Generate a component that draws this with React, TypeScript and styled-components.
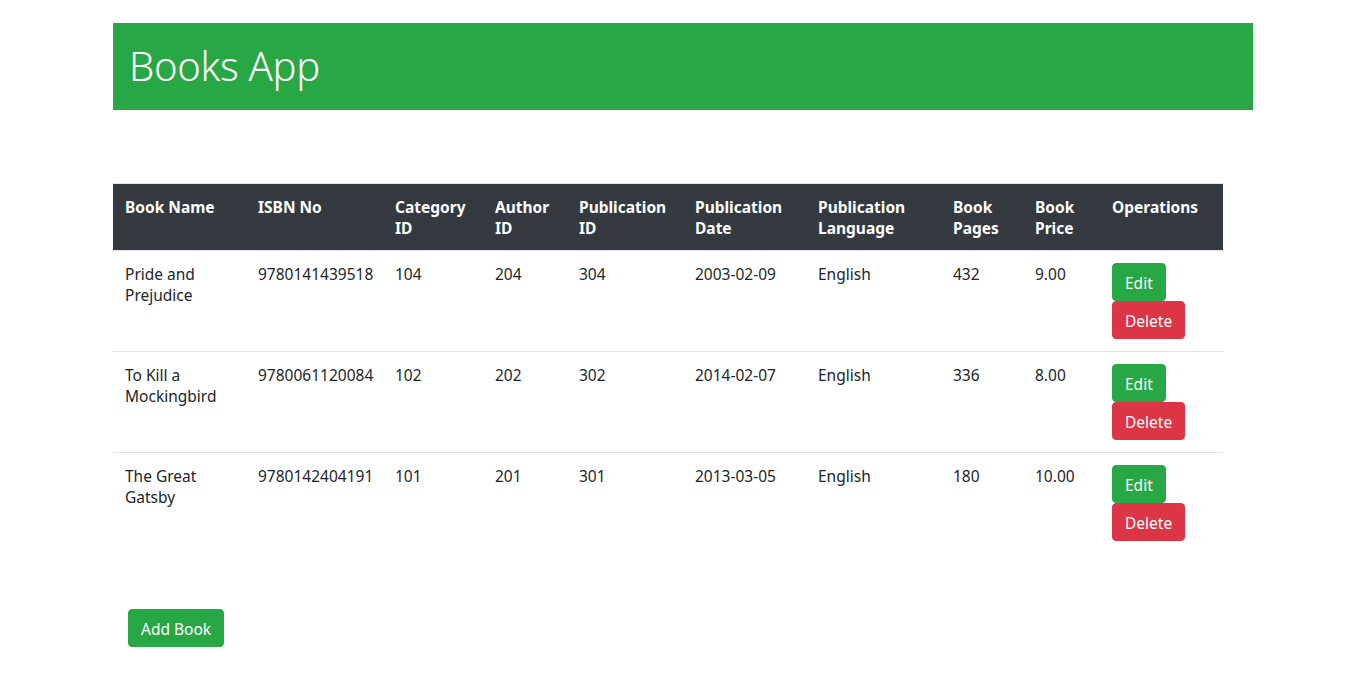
import React from "react";
import styled, { createGlobalStyle } from "styled-components";

const GlobalStyle = createGlobalStyle`
  html, body { margin: 0; padding: 0; background: #fff; }
  body {
    font-family: "Noto Sans", "Open Sans", sans-serif;
    font-size: 16px;
    color: #212529;
  }
  * { box-sizing: border-box; }
`;

const Container = styled.div`
  width: 1140px;
  margin: 0 auto;
  padding-top: 23px;
`;

const Banner = styled.header`
  height: 87px;
  background: #28a745;
  display: flex;
  align-items: center;
  padding: 0 16px;
`;

const Title = styled.h1`
  margin: 0 0 2px;
  font-size: 40px;
  font-weight: 300;
  line-height: 48px;
  color: #fff;
  letter-spacing: -0.3px;
`;

const Table = styled.table`
  margin-top: 73px;
  width: 1110px;
  border-collapse: collapse;
  table-layout: fixed;
  border-top: 1px solid #dee2e6;
`;

const HeadCell = styled.th<{ $w: number }>`
  width: ${(p) => p.$w}px;
  background: #343a40;
  color: #fff;
  font-weight: 700;
  text-align: left;
  vertical-align: top;
  padding: 13px 12px 11px;
  font-size: 15.5px;
  line-height: 21px;
  border-bottom: 1px solid #dee2e6;
`;

const Row = styled.tr`
  & + & td { border-top: 1px solid #dee2e6; }
`;

const Cell = styled.td<{ $ops?: boolean }>`
  vertical-align: top;
  padding: ${(p) => (p.$ops ? "12px 12px" : "13px 12px 11px")};
  font-size: 15.5px;
  line-height: 21px;
  color: #212529;
`;

const Ops = styled.div`
  display: flex;
  flex-direction: column;
  align-items: flex-start;
`;

const Button = styled.button<{ $variant: "success" | "danger" }>`
  font-family: inherit;
  font-size: 15.5px;
  line-height: 24px;
  padding: 7px 12px 5px;
  border: 1px solid ${(p) => (p.$variant === "success" ? "#28a745" : "#dc3545")};
  background: ${(p) => (p.$variant === "success" ? "#28a745" : "#dc3545")};
  color: #fff;
  border-radius: 4px;
  cursor: pointer;
`;

const AddWrap = styled.div`
  margin-top: 56px;
  padding-left: 15px;
`;

const columns: [string, number][] = [
  ["Book Name", 133],
  ["ISBN No", 137],
  ["Category ID", 100],
  ["Author ID", 84],
  ["Publication ID", 116],
  ["Publication Date", 123],
  ["Publication Language", 135],
  ["Book Pages", 82],
  ["Book Price", 77],
  ["Operations", 123],
];

const books = [
  ["Pride and Prejudice", "9780141439518", "104", "204", "304", "2003-02-09", "English", "432", "9.00"],
  ["To Kill a Mockingbird", "9780061120084", "102", "202", "302", "2014-02-07", "English", "336", "8.00"],
  ["The Great Gatsby", "9780142404191", "101", "201", "301", "2013-03-05", "English", "180", "10.00"],
];

export default function App() {
  return (
    <>
      <GlobalStyle />
      <Container>
        <Banner>
          <Title>Books App</Title>
        </Banner>
        <Table>
          <thead>
            <tr>
              {columns.map(([name, w]) => (
                <HeadCell key={name} $w={w}>
                  {name}
                </HeadCell>
              ))}
            </tr>
          </thead>
          <tbody>
            {books.map((b) => (
              <Row key={b[1]}>
                {b.map((v, i) => (
                  <Cell key={i}>{v}</Cell>
                ))}
                <Cell $ops>
                  <Ops>
                    <Button $variant="success">Edit</Button>
                    <Button $variant="danger">Delete</Button>
                  </Ops>
                </Cell>
              </Row>
            ))}
          </tbody>
        </Table>
        <AddWrap>
          <Button $variant="success">Add Book</Button>
        </AddWrap>
      </Container>
    </>
  );
}
